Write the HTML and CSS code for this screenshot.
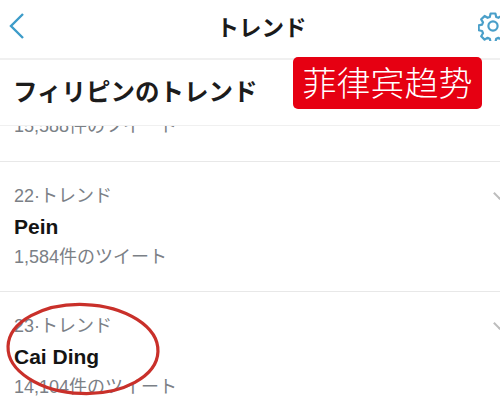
FILE: index.html
```html
<!DOCTYPE html>
<html lang="ja">
<head>
<meta charset="utf-8">
<title>トレンド</title>
<link rel="stylesheet" href="styles.css">
</head>
<body>
<main class="screen">
  <header class="nav">
    <svg class="back" width="18" height="28" viewBox="0 0 18 28"><path d="M15 2 3 14l12 12" fill="none" stroke="#3d9cc9" stroke-width="2.4"/></svg>
    <h1 class="nav-title">トレンド</h1>
    <svg class="gear" width="30" height="30" viewBox="0 0 30 30"><g fill="none" stroke="#4a9fc9" stroke-width="2.2"><circle cx="15" cy="15" r="4.6"/><path d="M12.6 2.5h4.8l.8 3.4 2.2.9 3-1.8 3.4 3.4-1.8 3 .9 2.2 3.4.8v4.8l-3.4.8-.9 2.2 1.8 3-3.4 3.4-3-1.8-2.2.9-.8 3.4h-4.8l-.8-3.4-2.2-.9-3 1.8-3.4-3.4 1.8-3-.9-2.2-3.4-.8v-4.8l3.4-.8.9-2.2-1.8-3 3.4-3.4 3 1.8 2.2-.9z" stroke-linejoin="round"/></g></svg>
  </header>
  <section class="heading">
    <h2 class="heading-title">フィリピンのトレンド</h2>
  </section>
  <div class="list">
    <div class="row row-clipped"><p class="meta">15,588件のツイート</p></div>
    <article class="row">
      <p class="meta">22·トレンド</p>
      <p class="name">Pein</p>
      <p class="meta">1,584件のツイート</p>
      <span class="chev"></span>
    </article>
    <article class="row">
      <p class="meta">23·トレンド</p>
      <p class="name">Cai Ding</p>
      <p class="meta">14,104件のツイート</p>
      <span class="chev"></span>
    </article>
  </div>
  <div class="badge">菲律宾趋势</div>
  <svg class="circle" width="170" height="104" viewBox="0 0 170 104"><ellipse cx="85" cy="52" rx="75" ry="44.5" fill="none" stroke="#c9302a" stroke-width="3.2" transform="rotate(2 85 52)"/></svg>
</main>
</body>
</html>
```
FILE: styles.css
```css
* { box-sizing: border-box; margin: 0; padding: 0; }
html, body { background: #fff; }
body { width: 500px; height: 418px; overflow: hidden; font-family: "Liberation Sans", "Noto Sans CJK JP", sans-serif; }
.screen { position: relative; width: 500px; height: 418px; overflow: hidden; display: flex; flex-direction: column; }
.nav { height: 60px; flex: none; display: flex; align-items: center; justify-content: space-between; border-bottom: 2px solid #f0f0f0; padding-left: 8px; margin-right: -8px; padding-bottom: 7px; }
.nav-title { font-family: "Noto Sans CJK JP", sans-serif; font-size: 22.5px; font-weight: 700; color: #1a1a1a; line-height: 30px; margin-left: 19px; }
.back, .gear { flex: none; }
.heading { height: 66px; flex: none; padding: 13px 0 0 13px; border-bottom: 1px solid #f0f0f0; }
.heading-title { font-family: "Noto Sans CJK JP", sans-serif; font-size: 24.5px; font-weight: 700; color: #1c1c1c; line-height: 36px; }
.list { flex: 1; min-height: 0; display: flex; flex-direction: column; }
.row { position: relative; flex: none; height: 130px; padding: 19px 0 0 14px; border-bottom: 1px solid #e8e8e8; }
.row-clipped { height: 36px; padding-top: 0; display: flex; align-items: flex-start; overflow: hidden; }
.row-clipped .meta { margin-top: -15px; }
.meta { font-family: "Liberation Sans", "Noto Sans CJK JP", sans-serif; font-size: 18px; line-height: 30px; color: #7b8086; white-space: nowrap; }
.name { font-size: 21px; font-weight: 700; line-height: 31px; color: #141414; }
.chev { position: absolute; right: -4px; top: 27px; width: 9px; height: 9px; border-right: 2px solid #bdbdbd; border-bottom: 2px solid #bdbdbd; transform: rotate(45deg); }
.badge { position: absolute; left: 293px; top: 57px; width: 189px; height: 52px; background: #e60012; border-radius: 5px; color: #fff; font-family: "Noto Sans CJK SC", sans-serif; font-size: 34px; font-weight: 300; line-height: 50px; text-align: center; }
.circle { position: absolute; left: -2px; top: 297px; }
```
